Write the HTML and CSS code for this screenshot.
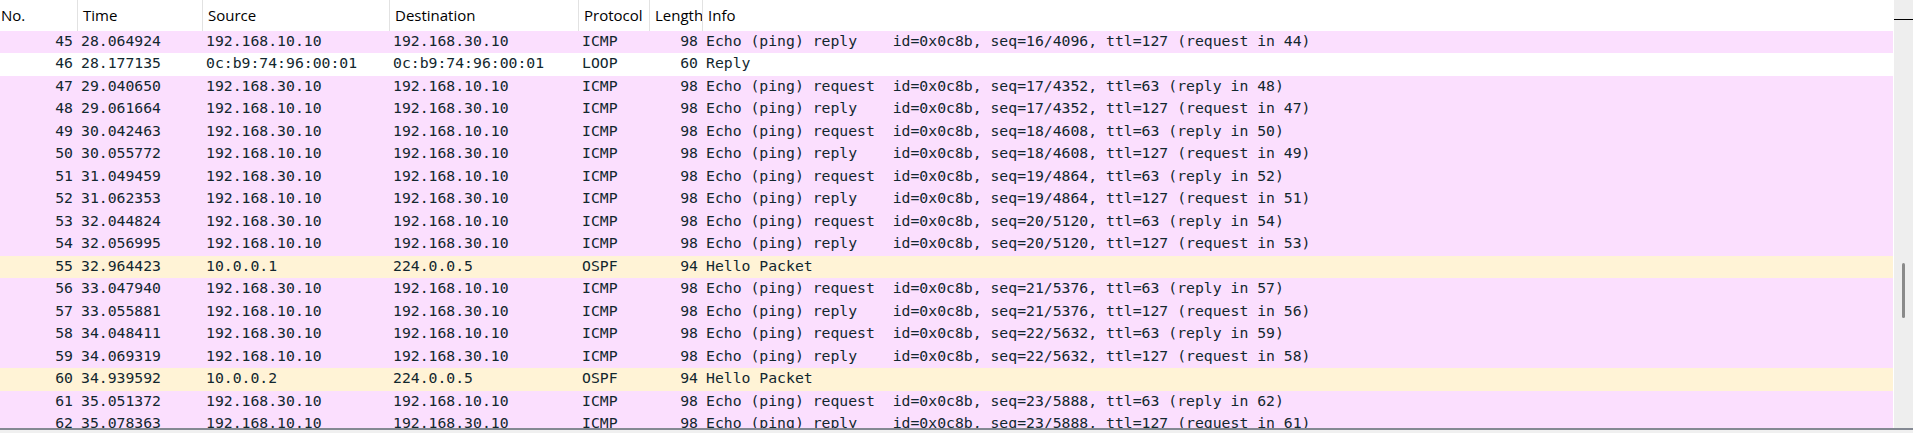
FILE: index.html
```html
<!DOCTYPE html>
<html>
<head>
<meta charset="utf-8">
<link rel="stylesheet" href="styles.css">
</head>
<body>
<div class="app">
  <div class="pane">
    <div class="list">
      <div class="head cols">
        <div class="hc first">No.</div>
        <div class="hc">Time</div>
        <div class="hc">Source</div>
        <div class="hc">Destination</div>
        <div class="hc">Protocol</div>
        <div class="hc">Length</div>
        <div class="hc">Info</div>
      </div>
      <div class="rows">
        <div class="row cols icmp"><div class="c r">45</div><div class="c">28.064924</div><div class="c">192.168.10.10</div><div class="c">192.168.30.10</div><div class="c">ICMP</div><div class="c r">98</div><div class="c">Echo (ping) reply    id=0x0c8b, seq=16/4096, ttl=127 (request in 44)</div></div>
        <div class="row cols loop"><div class="c r">46</div><div class="c">28.177135</div><div class="c">0c:b9:74:96:00:01</div><div class="c">0c:b9:74:96:00:01</div><div class="c">LOOP</div><div class="c r">60</div><div class="c">Reply</div></div>
        <div class="row cols icmp"><div class="c r">47</div><div class="c">29.040650</div><div class="c">192.168.30.10</div><div class="c">192.168.10.10</div><div class="c">ICMP</div><div class="c r">98</div><div class="c">Echo (ping) request  id=0x0c8b, seq=17/4352, ttl=63 (reply in 48)</div></div>
        <div class="row cols icmp"><div class="c r">48</div><div class="c">29.061664</div><div class="c">192.168.10.10</div><div class="c">192.168.30.10</div><div class="c">ICMP</div><div class="c r">98</div><div class="c">Echo (ping) reply    id=0x0c8b, seq=17/4352, ttl=127 (request in 47)</div></div>
        <div class="row cols icmp"><div class="c r">49</div><div class="c">30.042463</div><div class="c">192.168.30.10</div><div class="c">192.168.10.10</div><div class="c">ICMP</div><div class="c r">98</div><div class="c">Echo (ping) request  id=0x0c8b, seq=18/4608, ttl=63 (reply in 50)</div></div>
        <div class="row cols icmp"><div class="c r">50</div><div class="c">30.055772</div><div class="c">192.168.10.10</div><div class="c">192.168.30.10</div><div class="c">ICMP</div><div class="c r">98</div><div class="c">Echo (ping) reply    id=0x0c8b, seq=18/4608, ttl=127 (request in 49)</div></div>
        <div class="row cols icmp"><div class="c r">51</div><div class="c">31.049459</div><div class="c">192.168.30.10</div><div class="c">192.168.10.10</div><div class="c">ICMP</div><div class="c r">98</div><div class="c">Echo (ping) request  id=0x0c8b, seq=19/4864, ttl=63 (reply in 52)</div></div>
        <div class="row cols icmp"><div class="c r">52</div><div class="c">31.062353</div><div class="c">192.168.10.10</div><div class="c">192.168.30.10</div><div class="c">ICMP</div><div class="c r">98</div><div class="c">Echo (ping) reply    id=0x0c8b, seq=19/4864, ttl=127 (request in 51)</div></div>
        <div class="row cols icmp"><div class="c r">53</div><div class="c">32.044824</div><div class="c">192.168.30.10</div><div class="c">192.168.10.10</div><div class="c">ICMP</div><div class="c r">98</div><div class="c">Echo (ping) request  id=0x0c8b, seq=20/5120, ttl=63 (reply in 54)</div></div>
        <div class="row cols icmp"><div class="c r">54</div><div class="c">32.056995</div><div class="c">192.168.10.10</div><div class="c">192.168.30.10</div><div class="c">ICMP</div><div class="c r">98</div><div class="c">Echo (ping) reply    id=0x0c8b, seq=20/5120, ttl=127 (request in 53)</div></div>
        <div class="row cols ospf"><div class="c r">55</div><div class="c">32.964423</div><div class="c">10.0.0.1</div><div class="c">224.0.0.5</div><div class="c">OSPF</div><div class="c r">94</div><div class="c">Hello Packet</div></div>
        <div class="row cols icmp"><div class="c r">56</div><div class="c">33.047940</div><div class="c">192.168.30.10</div><div class="c">192.168.10.10</div><div class="c">ICMP</div><div class="c r">98</div><div class="c">Echo (ping) request  id=0x0c8b, seq=21/5376, ttl=63 (reply in 57)</div></div>
        <div class="row cols icmp"><div class="c r">57</div><div class="c">33.055881</div><div class="c">192.168.10.10</div><div class="c">192.168.30.10</div><div class="c">ICMP</div><div class="c r">98</div><div class="c">Echo (ping) reply    id=0x0c8b, seq=21/5376, ttl=127 (request in 56)</div></div>
        <div class="row cols icmp"><div class="c r">58</div><div class="c">34.048411</div><div class="c">192.168.30.10</div><div class="c">192.168.10.10</div><div class="c">ICMP</div><div class="c r">98</div><div class="c">Echo (ping) request  id=0x0c8b, seq=22/5632, ttl=63 (reply in 59)</div></div>
        <div class="row cols icmp"><div class="c r">59</div><div class="c">34.069319</div><div class="c">192.168.10.10</div><div class="c">192.168.30.10</div><div class="c">ICMP</div><div class="c r">98</div><div class="c">Echo (ping) reply    id=0x0c8b, seq=22/5632, ttl=127 (request in 58)</div></div>
        <div class="row cols ospf"><div class="c r">60</div><div class="c">34.939592</div><div class="c">10.0.0.2</div><div class="c">224.0.0.5</div><div class="c">OSPF</div><div class="c r">94</div><div class="c">Hello Packet</div></div>
        <div class="row cols icmp"><div class="c r">61</div><div class="c">35.051372</div><div class="c">192.168.30.10</div><div class="c">192.168.10.10</div><div class="c">ICMP</div><div class="c r">98</div><div class="c">Echo (ping) request  id=0x0c8b, seq=23/5888, ttl=63 (reply in 62)</div></div>
        <div class="row cols icmp"><div class="c r">62</div><div class="c">35.078363</div><div class="c">192.168.10.10</div><div class="c">192.168.30.10</div><div class="c">ICMP</div><div class="c r">98</div><div class="c">Echo (ping) reply    id=0x0c8b, seq=23/5888, ttl=127 (request in 61)</div></div>
      </div>
    </div>
    <div class="vscroll">
      <div class="vscroll-top"></div>
      <div class="thumb"></div>
    </div>
  </div>
  <div class="bottom"></div>
</div>
</body>
</html>
```

FILE: styles.css
```css
html, body {
  margin: 0;
  padding: 0;
  background: #f0f0f0;
}
.app {
  width: 1913px;
  height: 433px;
  overflow: hidden;
  display: flex;
  flex-direction: column;
}
.pane {
  height: 428px;
  display: flex;
  overflow: hidden;
  flex: 0 0 auto;
}
.list {
  flex: 0 0 1893px;
  border-right: 1px solid #ffffff;
  background: #ffffff;
  overflow: hidden;
}
.cols {
  display: grid;
  grid-template-columns: 77px 125px 187px 189px 71px 53px 1191px;
}
.head {
  height: 31px;
  background: #ffffff;
}
.hc {
  font-family: "Open Sans", "Noto Sans", sans-serif;
  font-size: 15px;
  line-height: 31px;
  color: #000000;
  border-left: 1px solid #e2e2e2;
  padding-left: 5px;
  white-space: nowrap;
  overflow: hidden;
}
.hc.first {
  border-left: none;
  padding-left: 1px;
}
.row {
  height: 22.47px;
  font-family: "DejaVu Sans Mono", "Liberation Mono", monospace;
  font-size: 14.77px;
  line-height: 20.5px;
  color: #12272e;
}
.icmp { background: #fbdffe; }
.ospf { background: #fff3d6; }
.loop { background: #ffffff; }
.c {
  padding: 0 4px;
  white-space: pre;
  overflow: hidden;
}
.c.r {
  text-align: right;
}
.vscroll {
  flex: 1 1 auto;
  background: #eeeeee;
  display: flex;
  flex-direction: column;
}
.vscroll-top {
  height: 19px;
  border-bottom: 1px solid #000000;
}
.thumb {
  width: 3px;
  height: 55px;
  margin-top: 243px;
  margin-left: 8px;
  border-radius: 2px;
  background: #8a8a8a;
}
.bottom {
  height: 2px;
  background: #848993;
  flex: 0 0 auto;
}
```
